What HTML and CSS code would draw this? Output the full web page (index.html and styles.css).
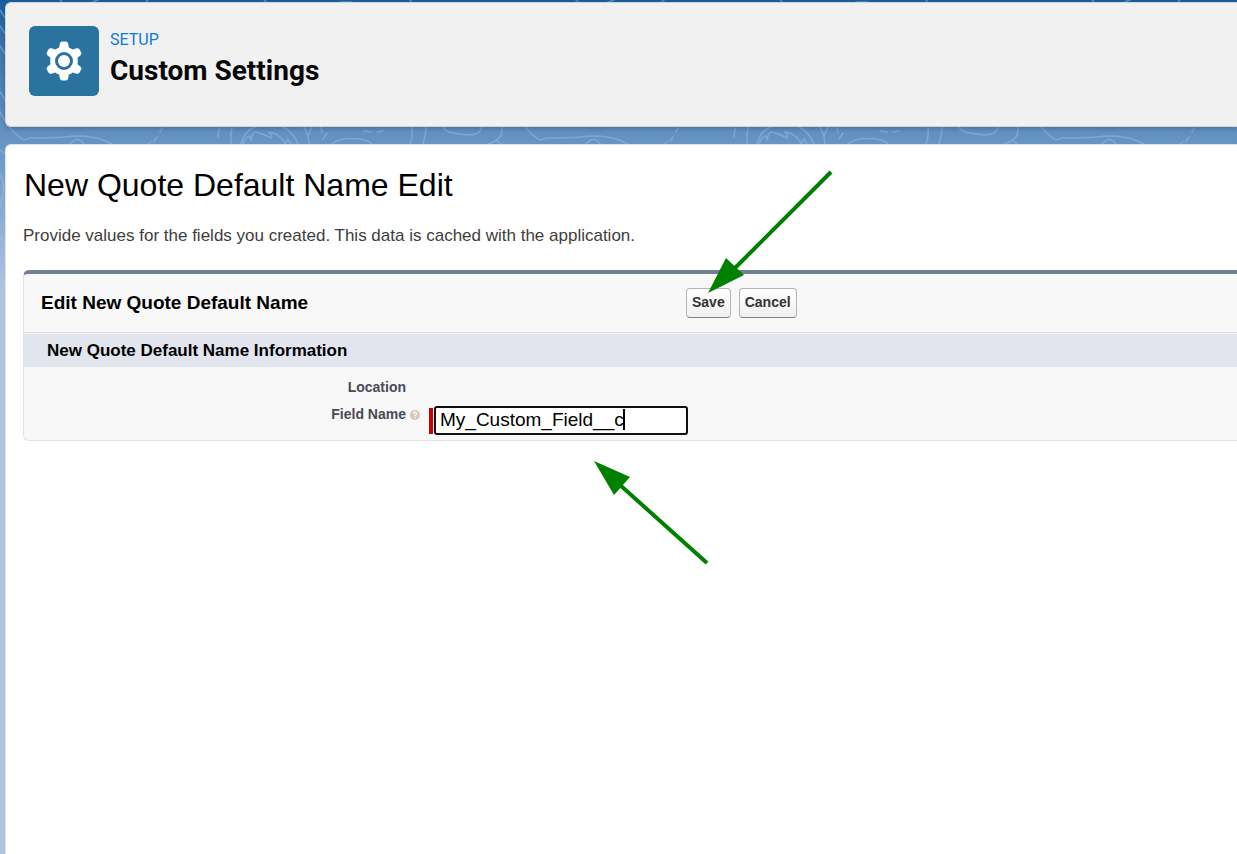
FILE: index.html
```html
<!DOCTYPE html>
<html lang="en">
<head>
<meta charset="utf-8">
<title>Custom Settings</title>
<link rel="stylesheet" href="styles.css">
</head>
<body>
<svg class="backdrop" aria-hidden="true">
  <defs>
    <pattern id="topo" width="516" height="330" patternUnits="userSpaceOnUse">
      <g fill="none" stroke="#9dbbe0" stroke-opacity=".5" stroke-width="1.500" stroke-linecap="round">
        <path d="M0 10q3 5 8 12M0 26l6 9M0 46l6 9M0 92q6 8 12 22M0 112Q12 134 24 140L31 138Q52 138 65 137Q92 133 112 144M70 144Q78 135 84 144"/>
        <path d="M162 128l-2 4M157 137l-3 4M151 142l-3 2M219 128l-1 9M232 127q-2 8-1 17M241 144q3-13 14-17M283 127q10 5 15 17"/>
        <path d="M243 144q2-7 7-8l1 5q1-9 5-9q8 2 15 6q2-4-3-6q8 0 15 8l2 4l3-5l3 5M304 127l4 9l4-9M308 136l1 8M321 127l1 6M327 133l-4 6"/>
        <path d="M332 144q8-7 28-5q8 1 12 5M364 131l7 1M377 132l6-1M412 127q1 8-2 17M426 127q0 8-3 17M443 127q3 5 10 6q18 3 22 1q4 0 7-7M502 127q0 8-2 10q-3 4-12 7M497 141l6 4"/>
        <path d="M0 150l5 4M0 174q7 12 0 32M0 236q3 4 6 12M60 0l4 4M90 3l8-3M148 0l-4 4M264 0l5 4M340 2l12 0M410 0l3 4"/>
      </g>
    </pattern>
  </defs>
  <rect width="100%" height="330" fill="url(#topo)"/>
</svg>
<div class="page">
  <header class="page-header">
    <span class="setup-icon">
      <svg viewBox="0 0 40 40" aria-hidden="true">
        <path fill="#fff" fill-rule="evenodd" d="M18.300.5h3.400q2 0 2.400 2l.7 3.900q2.200.8 4 2.200l3.700-1.300q1.900-.6 2.900 1l1.700 3q1 1.700-.5 3l-3 2.500q.4 3.200 0 6.400l3 2.500q1.500 1.300.5 3l-1.700 3q-1 1.600-2.900 1l-3.700-1.300q-1.800 1.400-4 2.200l-.7 3.900q-.4 2-2.400 2h-3.400q-2 0-2.400-2l-.7-3.900q-2.200-.8-4-2.200l-3.700 1.300q-1.900.6-2.900-1l-1.700-3q-1-1.700.5-3l3-2.500q-.4-3.200 0-6.400l-3-2.500q-1.500-1.300-.5-3l1.700-3q1-1.600 2.900-1l3.700 1.300q1.800-1.400 4-2.200l.7-3.900q.4-2 2.400-2zM20 11a9 9 0 1 0 0 18a9 9 0 0 0 0-18z"/>
        <circle cx="20" cy="20" r="6" fill="#fff"/>
      </svg>
    </span>
    <div class="header-text">
      <p class="eyebrow">SETUP</p>
      <h1 class="header-title">Custom Settings</h1>
    </div>
  </header>
  <main class="content">
    <h2 class="content-title">New Quote Default Name Edit</h2>
    <p class="intro">Provide values for the fields you created. This data is cached with the application.</p>
    <form class="edit-block" onsubmit="return false">
      <div class="block-head">
        <h3 class="block-title">Edit New Quote Default Name</h3>
        <div class="actions">
          <button class="btn" type="submit">Save</button>
          <button class="btn" type="button">Cancel</button>
          <svg class="arrow arrow-save" viewBox="0 0 126 124" aria-hidden="true">
            <path d="M123 2L26 99" stroke="#008000" stroke-width="4"/>
            <path d="M0 123L18 88L36 105z" fill="#008000"/>
          </svg>
        </div>
      </div>
      <h4 class="section-title">New Quote Default Name Information</h4>
      <div class="fields">
        <span class="label">Location</span>
        <span></span>
        <label class="label" for="field-name">Field Name</label>
        <div class="field">
          <svg class="help" viewBox="0 0 10 10" aria-hidden="true">
            <circle cx="5" cy="5" r="5" fill="#d5c9b5"/>
            <path d="M3.300 3.800Q3.500 2.200 5 2.200T6.700 3.800Q6.700 4.700 5 5.200V6.300M5 7.200V8.300" fill="none" stroke="#fff" stroke-width="1.300"/>
          </svg>
          <div class="required">
            <input class="text-input" id="field-name" type="text" value="My_Custom_Field__c" required>
            <span class="caret"></span>
            <svg class="arrow arrow-field" viewBox="0 0 116 104" aria-hidden="true">
              <path d="M113 102L26 24" stroke="#008000" stroke-width="4"/>
              <path d="M0 0L36 16L20 34z" fill="#008000"/>
            </svg>
          </div>
        </div>
      </div>
    </form>
  </main>
</div>
</body>
</html>
```

FILE: styles.css
```css
* { box-sizing: border-box; }

body {
  margin: 0;
  font-family: "Liberation Sans", Arial, sans-serif;
  background: #b0c4df linear-gradient(#195d9f 0, #3c75b0 50px, #6795c4 144px, #b0c4df 290px) no-repeat;
  overflow-x: hidden;
}

h1, h2, h3, h4, p { margin: 0; }

.backdrop {
  position: absolute;
  top: 0;
  left: 0;
  z-index: -1;
  width: 100%;
  height: 330px;
}

.page {
  display: flex;
  flex-direction: column;
  gap: 17px;
  min-height: 100vh;
  padding: 2px 0 0 5px;
}

.page-header {
  display: flex;
  align-items: flex-start;
  gap: 11px;
  padding: 23px 23px 30px;
  font-family: Roboto, sans-serif;
  background: #f1f1f1;
  border: 1px solid #d4d4d4;
  border-right: 0;
  border-radius: 6px 0 0 6px;
  box-shadow: 0 2px 4px rgba(0, 0, 0, .2);
}

.setup-icon {
  display: grid;
  place-items: center;
  width: 70px;
  height: 70px;
  border-radius: 6px;
  background: #2a739e;
}

.setup-icon svg { width: 40px; height: 40px; }

.header-text { padding-top: 4px; }

.eyebrow {
  font-size: 16px;
  line-height: 20px;
  color: #0b7ad8;
}

.header-title {
  font-size: 28px;
  line-height: 42px;
  font-weight: 700;
  color: #080707;
}

.content {
  flex: 1;
  padding: 20px 0 20px 17px;
  background: #fff;
  border: 1px solid #dde3ec;
  border-right: 0;
  border-bottom: 0;
  border-radius: 6px 0 0 0;
}

.content-title {
  padding-left: 1px;
  font-size: 32px;
  line-height: 40px;
  font-weight: 400;
  color: #000;
}

.intro {
  padding: 20px 0 23px;
  font-size: 17px;
  line-height: 22px;
  color: #3e3e3c;
}

.edit-block {
  background: #f8f8f8;
  border: 1px solid #e4e4e4;
  border-top: 4px solid #747e96;
  border-right: 0;
  border-radius: 6px 0 0 6px;
}

.block-head {
  display: grid;
  grid-template-columns: 645px 1fr;
  align-items: center;
  height: 59px;
  padding-left: 17px;
  border-bottom: 1px solid #dbdbdb;
}

.block-title { font-size: 19px; color: #000; }

.actions {
  position: relative;
  display: flex;
  gap: 8px;
}

.btn {
  height: 30px;
  padding: 0 5px 2px;
  font: bold 14px "Liberation Sans", Arial, sans-serif;
  color: #333;
  background: linear-gradient(#fff, #f0f0f0);
  border: 1px solid #b5b5b5;
  border-bottom-color: #7f7f7f;
  border-radius: 4px;
}

.section-title {
  margin-top: 1px;
  padding-left: 23px;
  font-size: 17px;
  line-height: 33px;
  color: #000;
  background: #e2e4ee;
}

.fields {
  display: grid;
  grid-template-columns: 382px 1fr;
  column-gap: 4px;
  row-gap: 11px;
  padding: 12px 0 5px;
}

.label {
  font-size: 14px;
  line-height: 16px;
  font-weight: 700;
  text-align: right;
  color: #4a4a56;
}

.field {
  display: flex;
  align-items: flex-start;
  gap: 9px;
}

.help { width: 10px; height: 10px; margin-top: 4px; }

.required {
  position: relative;
  display: flex;
  align-items: center;
  gap: 1px;
}

.required::before {
  content: "";
  width: 4px;
  height: 26px;
  background: #c00;
}

.text-input {
  width: 254px;
  height: 29px;
  padding: 0 4px 2px;
  font: 19px "Liberation Sans", Arial, sans-serif;
  color: #000;
  background: #fff;
  border: 2px solid #101010;
  border-radius: 3px;
  outline: 0;
}

.caret {
  position: absolute;
  top: 3px;
  left: 194px;
  width: 2px;
  height: 21px;
  background: #000;
}

.arrow { position: absolute; z-index: 1; pointer-events: none; }

.arrow-save { top: -118px; left: 22px; width: 126px; height: 124px; }

.arrow-field { top: 55px; left: 165px; width: 116px; height: 104px; }
```
